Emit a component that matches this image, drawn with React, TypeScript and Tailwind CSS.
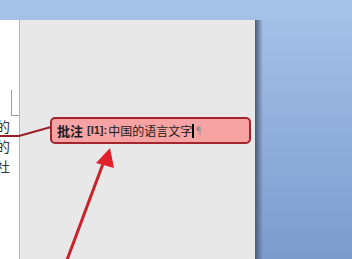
export default function App() {
  return (
    <div className="relative h-[259px] w-[352px] overflow-hidden bg-linear-to-b from-[#a8c3e9] to-[#7b9bcd] font-['Noto_Sans_CJK_SC',sans-serif]">
      <div className="flex h-full pt-[20px]">
        {/* page */}
        <div className="flex w-[255px] bg-[#e8e8e8]">
          <div className="w-[20px] shrink-0 overflow-hidden border-r border-[#b8b8b8] bg-white">
            <div className="mt-[70px] ml-[11px] h-[26px] w-[9px] border-b border-l border-[#9a9a9a]" />
            <div className="-ml-[4px] text-[14px] leading-[20px] text-[#333]">
              <div>的</div>
              <div>的</div>
              <div>社</div>
            </div>
          </div>
          <div className="flex-1 pt-[97px] pl-[30px]">
            <div className="flex h-[27px] w-[201px] items-center rounded-[5px] border-2 border-[#a3262c] bg-[#f8a3a3] pl-[5px] text-[#1a1a1a]">
              <span className="text-[13px] font-bold">批注</span>
              <span className="ml-[4px] text-[11px] font-bold text-[#2a2a2a] font-['Liberation_Sans',sans-serif]">[I1]:</span>
              <span className="ml-[1px] text-[12px]">中国的语言文字</span>
              <span className="h-[14px] w-[2px] bg-black" />
              <span className="text-[9px] text-[#8a8a8a]">¶</span>
            </div>
          </div>
        </div>
        <div className="w-[8px] bg-linear-to-r from-[#4b5a73] to-transparent" />
      </div>

      {/* connector and arrow overlay */}
      <svg className="absolute inset-0" width="352" height="259" viewBox="0 0 352 259">
        <polyline points="0,136 19,136 51,127" fill="none" stroke="#9b1f25" strokeWidth="2" />
        <line x1="67" y1="260" x2="104" y2="161" stroke="#c8232a" strokeWidth="3" />
        <polygon points="110,148 96,163 114,168" fill="#e2212a" />
      </svg>
    </div>
  )
}
